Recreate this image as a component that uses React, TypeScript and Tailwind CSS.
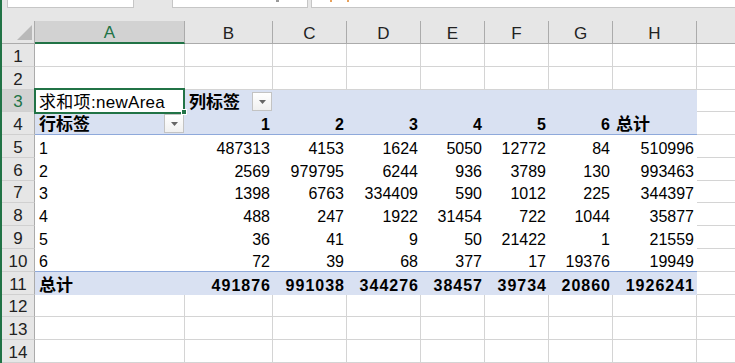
import type { ReactNode } from 'react'

const GREEN = '#217346'

// column widths include the 1px gridline on the right
const COL_W = [
  'w-[150px]',
  'w-[88px]',
  'w-[74px]',
  'w-[74px]',
  'w-[64px]',
  'w-[64px]',
  'w-[64px]',
  'w-[84px]',
]
const LETTERS = ['A', 'B', 'C', 'D', 'E', 'F', 'G', 'H']

const DATA: number[][] = [
  [487313, 4153, 1624, 5050, 12772, 84, 510996],
  [2569, 979795, 6244, 936, 3789, 130, 993463],
  [1398, 6763, 334409, 590, 1012, 225, 344397],
  [488, 247, 1922, 31454, 722, 1044, 35877],
  [36, 41, 9, 50, 21422, 1, 21559],
  [72, 39, 68, 377, 17, 19376, 19949],
]
const TOTALS = [491876, 991038, 344276, 38457, 39734, 20860, 1926241]

function RowHead({ n, active }: { n: number; active?: boolean }) {
  return (
    <div
      className={`flex h-full w-[33px] shrink-0 items-end justify-center border-r border-b border-r-[#ababab] border-b-[#d0d0d0] text-[17px] leading-[18px] ${
        active ? 'bg-[#d2d2d2] text-[#217346]' : 'bg-[#e6e6e6] text-[#222]'
      }`}
    >
      {n}
    </div>
  )
}

function Cell({
  i,
  className = '',
  children,
}: {
  i: number
  className?: string
  children?: ReactNode
}) {
  return (
    <div className={`relative flex h-full shrink-0 items-end leading-[18px] ${COL_W[i]} ${className}`}>
      {children}
    </div>
  )
}

function Rest({ grid = true }: { grid?: boolean }) {
  return <div className={`h-full flex-1 ${grid ? 'border-b border-[#d4d4d4]' : ''}`} />
}

function FilterButton() {
  return (
    <div className="absolute right-[1px] bottom-[1px] flex h-[19px] w-[20px] items-center justify-center border border-[#c3c3c3] bg-gradient-to-b from-white to-[#f0f0f0]">
      <svg width="7" height="4" viewBox="0 0 7 4">
        <path d="M0 0h7L3.5 4z" fill="#666" />
      </svg>
    </div>
  )
}

function EmptyRow({ n }: { n: number }) {
  return (
    <div className="flex h-[23px]">
      <RowHead n={n} />
      {COL_W.map((_, i) => (
        <Cell key={i} i={i} className="border-r border-b border-[#d4d4d4]" />
      ))}
      <Rest />
    </div>
  )
}

export default function App() {
  return (
    <div className="relative flex h-[363px] w-[735px] overflow-hidden bg-white font-['Liberation_Sans','Noto_Sans_CJK_SC',sans-serif] text-[16px] text-black">
      <div className="w-[2px] shrink-0" style={{ background: GREEN }} />
      <div className="flex min-w-0 flex-1 flex-col">
        {/* formula bar remnants */}
        <div className="flex h-[21px] shrink-0 items-start bg-[#e6e6e6]">
          <div className="ml-[5px] h-[8px] w-[127px] border-x border-b border-[#c6c6c6] bg-white" />
          <div className="relative ml-[38px] h-[8px] w-[136px] border-x border-b border-[#c6c6c6] bg-white">
            <div className="absolute top-0 right-[28px] h-[2px] w-[3px] bg-[#9a9a9a]" />
          </div>
          <div className="relative ml-[3px] h-[8px] flex-1 border-l border-b border-[#c6c6c6] bg-white">
            <div className="absolute top-0 left-[18px] h-[2px] w-[2px] bg-[#e8a25c]" />
            <div className="absolute top-0 left-[35px] h-[2px] w-[2px] bg-[#e8a25c]" />
          </div>
        </div>

        {/* column headers */}
        <div className="flex h-[23px] shrink-0 bg-[#e6e6e6] text-[17px]">
          <div className="relative h-full w-[33px] shrink-0 border-r border-b border-[#ababab]">
            <svg className="absolute right-[2px] bottom-[3px]" width="15" height="15" viewBox="0 0 15 15">
              <path d="M15 0V15H0z" fill="#b9b9b9" />
            </svg>
          </div>
          {LETTERS.map((l, i) => (
            <Cell
              key={l}
              i={i}
              className={`justify-center border-r border-r-[#ababab] ${
                i === 0
                  ? 'border-b-2 border-b-[#217346] bg-[#d2d2d2] text-[#217346]'
                  : 'border-b border-b-[#ababab] text-[#222]'
              }`}
            >
              {l}
            </Cell>
          ))}
          <div className="h-full flex-1 border-b border-[#ababab]" />
        </div>

        <EmptyRow n={1} />
        <EmptyRow n={2} />

        {/* row 3 */}
        <div className="flex h-[23px]">
          <RowHead n={3} active />
          <Cell i={0} className="pl-[4px] text-[17px] tracking-[0.3px]">
            求和项:newArea
          </Cell>
          <div className="flex h-full bg-[#d9e1f2]">
            <Cell i={1} className="pl-[4px] text-[17px] font-bold">
              列标签
              <FilterButton />
            </Cell>
            {[2, 3, 4, 5, 6, 7].map((i) => (
              <Cell key={i} i={i} />
            ))}
          </div>
          <Rest />
        </div>

        {/* row 4 */}
        <div className="flex h-[23px]">
          <RowHead n={4} />
          <div className="flex h-full border-b border-[#8ea9db] bg-[#d9e1f2] font-bold">
            <Cell i={0} className="pl-[4px] text-[17px]">
              行标签
              <FilterButton />
            </Cell>
            {[1, 2, 3, 4, 5, 6].map((i) => (
              <Cell key={i} i={i} className="justify-end pr-[3px]">
                {i}
              </Cell>
            ))}
            <Cell i={7} className="pl-[3px] text-[17px]">
              总计
            </Cell>
          </div>
          <Rest />
        </div>

        {/* data rows */}
        {DATA.map((vals, r) => (
          <div key={r} className="flex h-[23px]">
            <RowHead n={r + 5} />
            <div className={`flex h-full ${r === 5 ? 'border-b border-[#8ea9db]' : ''}`}>
              <Cell i={0} className="pl-[4px]">
                {r + 1}
              </Cell>
              {vals.map((v, i) => (
                <Cell key={i} i={i + 1} className="justify-end pr-[3px]">
                  {v}
                </Cell>
              ))}
            </div>
            <Rest />
          </div>
        ))}

        {/* grand total */}
        <div className="flex h-[23px]">
          <RowHead n={11} />
          <div className="flex h-full bg-[#d9e1f2] font-bold">
            <Cell i={0} className="pl-[4px] text-[17px]">
              总计
            </Cell>
            {TOTALS.map((v, i) => (
              <Cell key={i} i={i + 1} className="justify-end pr-[2px] tracking-[1px]">
                {v}
              </Cell>
            ))}
          </div>
          <Rest />
        </div>

        <EmptyRow n={12} />
        <EmptyRow n={13} />
        <EmptyRow n={14} />
      </div>

      {/* active cell A3 */}
      <div className="absolute top-[88px] left-[34px] h-[26px] w-[151px] border-2 border-[#217346]" />
      <div className="absolute top-[109px] left-[181px] h-[6px] w-[6px] border border-white bg-[#217346]" />
    </div>
  )
}
